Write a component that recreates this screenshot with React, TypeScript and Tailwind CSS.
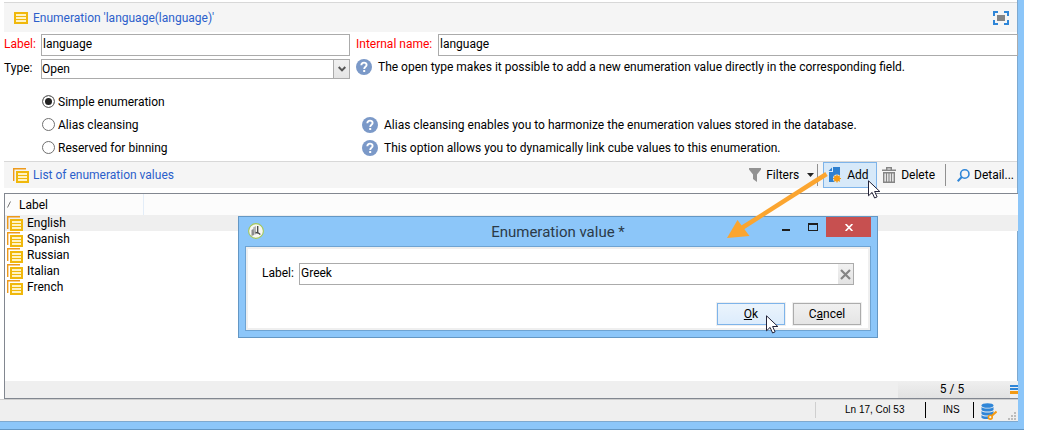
import type { ReactNode } from "react";

const languages = ["English", "Spanish", "Russian", "Italian", "French"];

function FormIcon() {
  return (
    <svg width="14" height="12" viewBox="0 0 14 12" className="shrink-0" aria-hidden="true">
      <path d="M0 0h14v12H0z" fill="#f0b80c" />
      <path d="M2 2h10v2H2zM2 5h10v2H2zM2 8h10v2H2z" fill="#fff3c4" />
    </svg>
  );
}

function ListIcon() {
  return (
    <svg width="16" height="15" viewBox="0 0 16 15" className="shrink-0" aria-hidden="true">
      <path d="M.7 13V.7H13" fill="none" stroke="#ee9a1a" strokeWidth="1.4" />
      <path d="M3 3h13v12H3z" fill="#f0b80c" />
      <path d="M5 5h9v2H5zM5 8h9v2H5zM5 11h9v2H5z" fill="#fff3c4" />
    </svg>
  );
}

function HelpIcon() {
  return (
    <svg width="16" height="16" viewBox="0 0 16 16" className="shrink-0" aria-hidden="true">
      <circle cx="8" cy="8" r="8" fill="#7b99c8" />
      <path d="M5.3 6.2C5.5 2.6 10.7 2.9 10.6 6c0 1.9-2.4 1.8-2.4 4" fill="none" stroke="#fff" strokeWidth="1.9" />
      <path d="M7.2 11h2v2h-2z" fill="#fff" />
    </svg>
  );
}

function ExpandIcon() {
  return (
    <svg width="16" height="14" viewBox="0 0 16 14" aria-hidden="true">
      <path d="M1 5V1h4M11 1h4v4M15 9v4h-4M5 13H1V9" fill="none" stroke="#2f86d8" strokeWidth="2" />
      <path d="M4 4h8v6H4z" fill="#858585" />
    </svg>
  );
}

function FunnelIcon() {
  return (
    <svg width="12" height="14" viewBox="0 0 12 14" aria-hidden="true">
      <path d="M0 0h12v1.5L8 6.5V14L4 11V6.5L0 1.5z" fill="#929292" />
    </svg>
  );
}

function AddIcon() {
  return (
    <svg width="14" height="16" viewBox="0 0 14 16" aria-hidden="true">
      <path d="M5 0h7v15H1V5h4z" fill="#2f80cf" />
      <path d="M4 .5V4H.5z" fill="#2f80cf" />
      <circle cx="9" cy="11.5" r="4" fill="#d7e9f9" />
      <path d="M9 7.500v8M5 11.500h8M6.200 8.700l5.600 5.600M11.800 8.700l-5.600 5.600" stroke="#f49a13" strokeWidth="1.1" />
      <circle cx="9" cy="11.5" r="3" fill="#f49a13" />
    </svg>
  );
}

function TrashIcon() {
  return (
    <svg width="14" height="16" viewBox="0 0 14 16" aria-hidden="true">
      <path d="M4.700 2.500V.7h4.600v1.800M0 3.200h14" fill="none" stroke="#858585" strokeWidth="1.4" />
      <path d="M1.700 5.700h10.600v9.600H1.700z" fill="#e8e8e8" stroke="#858585" strokeWidth="1.4" />
      <path d="M4.500 6v9M7 6v9M9.500 6v9" stroke="#858585" strokeWidth="1.1" />
    </svg>
  );
}

function SearchIcon() {
  return (
    <svg width="13" height="13" viewBox="0 0 13 13" aria-hidden="true">
      <circle cx="7.800" cy="5" r="4.200" fill="none" stroke="#2f86d8" strokeWidth="1.6" />
      <path d="M4.800 8L.7 12.200" stroke="#2f86d8" strokeWidth="2" />
    </svg>
  );
}

function AppIcon() {
  return (
    <svg width="16" height="16" viewBox="0 0 16 16" aria-hidden="true">
      <circle cx="8" cy="8" r="7.400" fill="#f7f7f2" stroke="#a3c65a" strokeWidth="1.100" />
      <path d="M3.500 7L6 5.500v6.500l-2.500 1z" fill="#8d8d8d" />
      <path d="M5 4.500l3-1.500v8l-1.500 1z" fill="#b4b4b4" />
      <path d="M9.700 3v7M7.500 9.500l3 .5 1.800 1.500" fill="none" stroke="#444" strokeWidth="1.300" />
    </svg>
  );
}

function DatabaseIcon() {
  return (
    <svg width="16" height="17" viewBox="0 0 16 17" aria-hidden="true">
      <ellipse cx="6.500" cy="2.500" rx="6" ry="2.300" fill="#2f86d8" />
      <path d="M.5 4c2 2 10 2 12 0v3c-2 2-10 2-12 0z" fill="#2f86d8" />
      <path d="M.5 8c2 2 10 2 12 0v3c-2 2-10 2-12 0z" fill="#2f86d8" />
      <path d="M.5 12c1.500 1.500 4 1.500 6.500 1.400V16c-3 .2-5.500 0-6.500-1.200z" fill="#2f86d8" />
      <path d="M15.500 8.500L10 13.500" stroke="#f49a13" strokeWidth="2" />
      <circle cx="9.300" cy="14.200" r="1.900" fill="#efefef" stroke="#f49a13" strokeWidth="1.600" />
    </svg>
  );
}

function Grip() {
  return (
    <svg width="8" height="8" viewBox="0 0 8 8" className="self-end" aria-hidden="true">
      <path d="M6 0h2v2H6zM3 3h2v2H3zM6 3h2v2H6zM0 6h2v2H0zM3 6h2v2H3zM6 6h2v2H6z" fill="#bcbcbc" />
    </svg>
  );
}

function Cursor({ className }: { className: string }) {
  return (
    <svg width="13" height="19" viewBox="0 0 13 19" className={className} aria-hidden="true">
      <path d="M.5.8v15l3.600-3.400 2.500 5.600 2.500-1.100-2.500-5.400h5.200z" fill="#fff" stroke="#222238" />
    </svg>
  );
}

function Radio({ label, checked, children }: { label: string; checked?: boolean; children?: ReactNode }) {
  return (
    <div className="flex h-[23px] items-center">
      <label className="flex w-80 items-center gap-[3px]">
        <input
          type="radio"
          name="kind"
          defaultChecked={checked}
          className="m-0 size-[13px] appearance-none rounded-full border border-[#707070] bg-white checked:bg-[#222] checked:shadow-[inset_0_0_0_2px_#fff]"
        />
        {label}
      </label>
      {children && (
        <p className="flex items-center gap-1.5">
          <HelpIcon />
          {children}
        </p>
      )}
    </div>
  );
}

function Dialog() {
  return (
    <section
      role="dialog"
      aria-labelledby="dialog-title"
      className="absolute top-[216px] right-40 w-[640px] border border-[#6497c4] bg-[#8cc6f9] px-1.5 pb-1.5"
    >
      <header className="flex h-[29px] items-start">
        <div className="flex w-[98px] pt-1.5 pl-[3px]">
          <AppIcon />
        </div>
        <h2 id="dialog-title" className="flex-1 pt-[5px] text-center text-[15px] leading-5 text-[#2b3a48]">
          Enumeration value *
        </h2>
        <button type="button" aria-label="Minimize" className="flex h-5 w-[26px] items-center justify-center">
          <svg width="8" height="8" viewBox="0 0 8 8" aria-hidden="true">
            <path d="M0 6h8v2H0z" fill="#1e1e1e" />
          </svg>
        </button>
        <button type="button" aria-label="Maximize" className="flex h-5 w-[27px] items-center justify-center">
          <svg width="10" height="8" viewBox="0 0 10 8" aria-hidden="true">
            <path d="M0 0h10v8H0zM1 2v5h8V2z" fill="#1e1e1e" fillRule="evenodd" />
          </svg>
        </button>
        <button type="button" aria-label="Close" className="flex h-5 w-[45px] items-center justify-center bg-[#c75050]">
          <svg width="8" height="7" viewBox="0 0 8 7" aria-hidden="true">
            <path d="M.6 0l6.800 7M7.400 0L.6 7" stroke="#fff" strokeWidth="1.700" />
          </svg>
        </button>
      </header>
      <form className="border border-[#6ea3d2] bg-white" onSubmit={(event) => event.preventDefault()}>
        <div className="border-2 border-[#efefef] pt-3.5 pr-[7px] pb-[3px] pl-3.5">
          <div className="flex items-center pr-[7px]">
            <label htmlFor="value-label" className="w-[37px] pb-0.5">
              Label:
            </label>
            <div className="flex h-[22px] flex-1 border border-[#ababab]">
              <input id="value-label" defaultValue="Greek" className="min-w-0 flex-1 px-px pb-0.5 outline-none" />
              <button
                type="button"
                aria-label="Clear"
                className="flex w-[15px] items-center justify-center bg-linear-to-b from-[#f1f1f1] to-[#e3e3e3]"
              >
                <svg width="11" height="11" viewBox="0 0 11 11" aria-hidden="true">
                  <path d="M1 1l9 9M10 1l-9 9" stroke="#858585" strokeWidth="2.200" />
                </svg>
              </button>
            </div>
          </div>
          <div className="mt-[18px] flex justify-end gap-2">
            <button
              type="submit"
              className="h-[22px] w-[68px] border border-[#7eb4ea] bg-linear-to-b from-[#ebf4fc] to-[#dcecfc] shadow-[0_0_0_1px_#efefef]"
            >
              <u>O</u>k
            </button>
            <button
              type="button"
              className="h-[22px] w-[68px] border border-[#acacac] bg-linear-to-b from-[#f0f0f0] to-[#e5e5e5] shadow-[0_0_0_1px_#efefef]"
            >
              C<u>a</u>ncel
            </button>
          </div>
        </div>
      </form>
    </section>
  );
}

export default function App() {
  return (
    <div className="relative bg-white pb-2 font-[Roboto,sans-serif] text-xs leading-4 text-black">
      <main className="mr-3.5 border-r-[6px] border-b-[7px] border-[#8cc6f9] shadow-[inset_-1px_-1px_0_#7fa9cf,0_1px_0_#6497c4]">
        <div className="pt-0.5 pl-1">
          <header className="mr-px flex h-[30px] items-center gap-[5px] border-t border-[#d8d8d8] bg-[#f5f5f5] pr-2 pl-2.5 text-[#2c5fcb]">
            <FormIcon />
            <h1 className="flex-1">Enumeration 'language(language)'</h1>
            <button type="button" aria-label="Full screen">
              <ExpandIcon />
            </button>
          </header>

          <div className="mt-0.5 grid grid-cols-[346px_1fr] gap-x-1.5 gap-y-[3px]">
            <div className="flex">
              <label htmlFor="label" className="w-[37px] pt-0.5 text-[#f00]">
                Label:
              </label>
              <input
                id="label"
                defaultValue="language"
                className="h-[22px] min-w-0 flex-1 border border-[#ababab] px-px pb-0.5 outline-none"
              />
            </div>
            <div className="flex">
              <label htmlFor="internal-name" className="w-[82px] pt-0.5 text-[#f00]">
                Internal name:
              </label>
              <input
                id="internal-name"
                defaultValue="language"
                className="h-[22px] min-w-0 flex-1 border border-[#ababab] px-px pb-0.5 outline-none"
              />
            </div>
            <div className="flex">
              <label htmlFor="type" className="w-[37px] pt-px">
                Type:
              </label>
              <div className="relative flex h-5 flex-1">
                <select id="type" className="flex-1 appearance-none border border-[#ababab] bg-white outline-none">
                  <option>Open</option>
                </select>
                <span className="pointer-events-none absolute inset-y-0 right-0 flex w-[17px] items-center justify-center border border-[#ababab] bg-linear-to-b from-[#f0f0f0] to-[#e5e5e5]">
                  <svg width="8" height="6" viewBox="0 0 8 6" aria-hidden="true">
                    <path d="M.7 1L4 4.400 7.300 1" fill="none" stroke="#555" strokeWidth="2" />
                  </svg>
                </span>
              </div>
            </div>
            <p className="flex items-start gap-1.5">
              <HelpIcon />
              The open type makes it possible to add a new enumeration value directly in the corresponding field.
            </p>
          </div>

          <div className="mt-[11px] pl-[38px]">
            <Radio label="Simple enumeration" checked />
            <Radio label="Alias cleansing">
              Alias cleansing enables you to harmonize the enumeration values stored in the database.
            </Radio>
            <Radio label="Reserved for binning">
              This option allows you to dynamically link cube values to this enumeration.
            </Radio>
          </div>

          <header className="mt-0.5 mr-px flex h-[27px] items-center border-t border-[#d8d8d8] bg-[#f5f5f5] pl-[9px]">
            <h2 className="flex flex-1 items-center gap-1 text-[#2c5fcb]">
              <ListIcon />
              List of enumeration values
            </h2>
            <button type="button" className="flex items-center gap-[5px]">
              <FunnelIcon />
              Filters
              <svg width="7" height="4" viewBox="0 0 7 4" className="ml-[3px]" aria-hidden="true">
                <path d="M0 0h7L3.500 4z" fill="#222" />
              </svg>
            </button>
            <span className="mr-[5px] ml-[3px] h-[22px] w-px bg-[#909090]" />
            <button type="button" className="flex h-[26px] w-[54px] items-center gap-[5px] border border-[#7eb4ea] bg-[#d7e9f9] pl-1">
              <AddIcon />
              Add
            </button>
            <button type="button" className="ml-[5px] flex items-center gap-[5px]">
              <TrashIcon />
              Delete
            </button>
            <span className="mr-[11px] ml-2.5 h-[22px] w-px bg-[#909090]" />
            <button type="button" className="flex w-[60px] items-center gap-1">
              <SearchIcon />
              Detail...
            </button>
          </header>

          <div className="mt-[5px] border-y border-l border-[#828790]">
            <div className="min-h-[187px]">
              <table className="w-full table-fixed border-collapse text-left">
                <thead>
                  <tr className="h-[21px] bg-[#fcfcfc]">
                    <th className="w-[138px] border-r border-[#e3edf8] p-0 font-normal">
                      <span className="flex items-center gap-[7px] pl-0.5">
                        <svg width="5" height="7" viewBox="0 0 5 7" aria-hidden="true">
                          <path d="M.5 6.500L3.500.5" stroke="#777" />
                        </svg>
                        Label
                      </span>
                    </th>
                    <th className="p-0" />
                  </tr>
                </thead>
                <tbody>
                  {languages.map((name) => (
                    <tr key={name} className="h-4 first:bg-[#efefef]">
                      <td colSpan={2} className="p-0">
                        <span className="flex items-center gap-1 pl-0.5">
                          <ListIcon />
                          {name}
                        </span>
                      </td>
                    </tr>
                  ))}
                </tbody>
              </table>
            </div>
            <footer className="flex h-[17px] items-center justify-end bg-[#efefef]">
              <span className="w-28 bg-linear-to-b from-[#efefef] to-[#e2e2e2] pr-1 text-center text-xs leading-[17px]">
                5 / 5
              </span>
              <svg width="8" height="9" viewBox="0 0 8 9" aria-hidden="true">
                <path d="M0 0h8v2H0zM0 3h8v2H0z" fill="#2f86d8" />
                <path d="M0 6h8v3H0z" fill="#f49a13" />
              </svg>
            </footer>
          </div>
        </div>

        <footer className="flex h-[23px] items-center justify-end border-t border-[#cfcfcf] bg-[#efefef] pr-0.5 pb-0.5 font-['Liberation_Sans',sans-serif] text-[10px] shadow-[inset_0_-1px_0_#7fa9cf]">
          <span className="h-4 w-px bg-[#cfcfcf]" />
          <span className="w-[109px] pl-[29px]">Ln 17, Col 53</span>
          <span className="h-4 w-px bg-black" />
          <span className="w-[47px] pl-[17px]">INS</span>
          <span className="h-4 w-px bg-black" />
          <span className="mr-[11px] ml-[7px] pt-0.5">
            <DatabaseIcon />
          </span>
          <Grip />
        </footer>
      </main>

      <Dialog />

      <svg
        width="104"
        height="70"
        viewBox="0 0 104 70"
        className="pointer-events-none absolute top-[170px] right-52"
        aria-hidden="true"
      >
        <path d="M100.500 4L15 58.500" stroke="#fba530" strokeWidth="4.500" />
        <path d="M1 68L11.500 50 23.500 66z" fill="#fba530" />
      </svg>
      <Cursor className="pointer-events-none absolute top-[180px] right-[157px]" />
      <Cursor className="pointer-events-none absolute top-[315px] right-[259px]" />
    </div>
  );
}
